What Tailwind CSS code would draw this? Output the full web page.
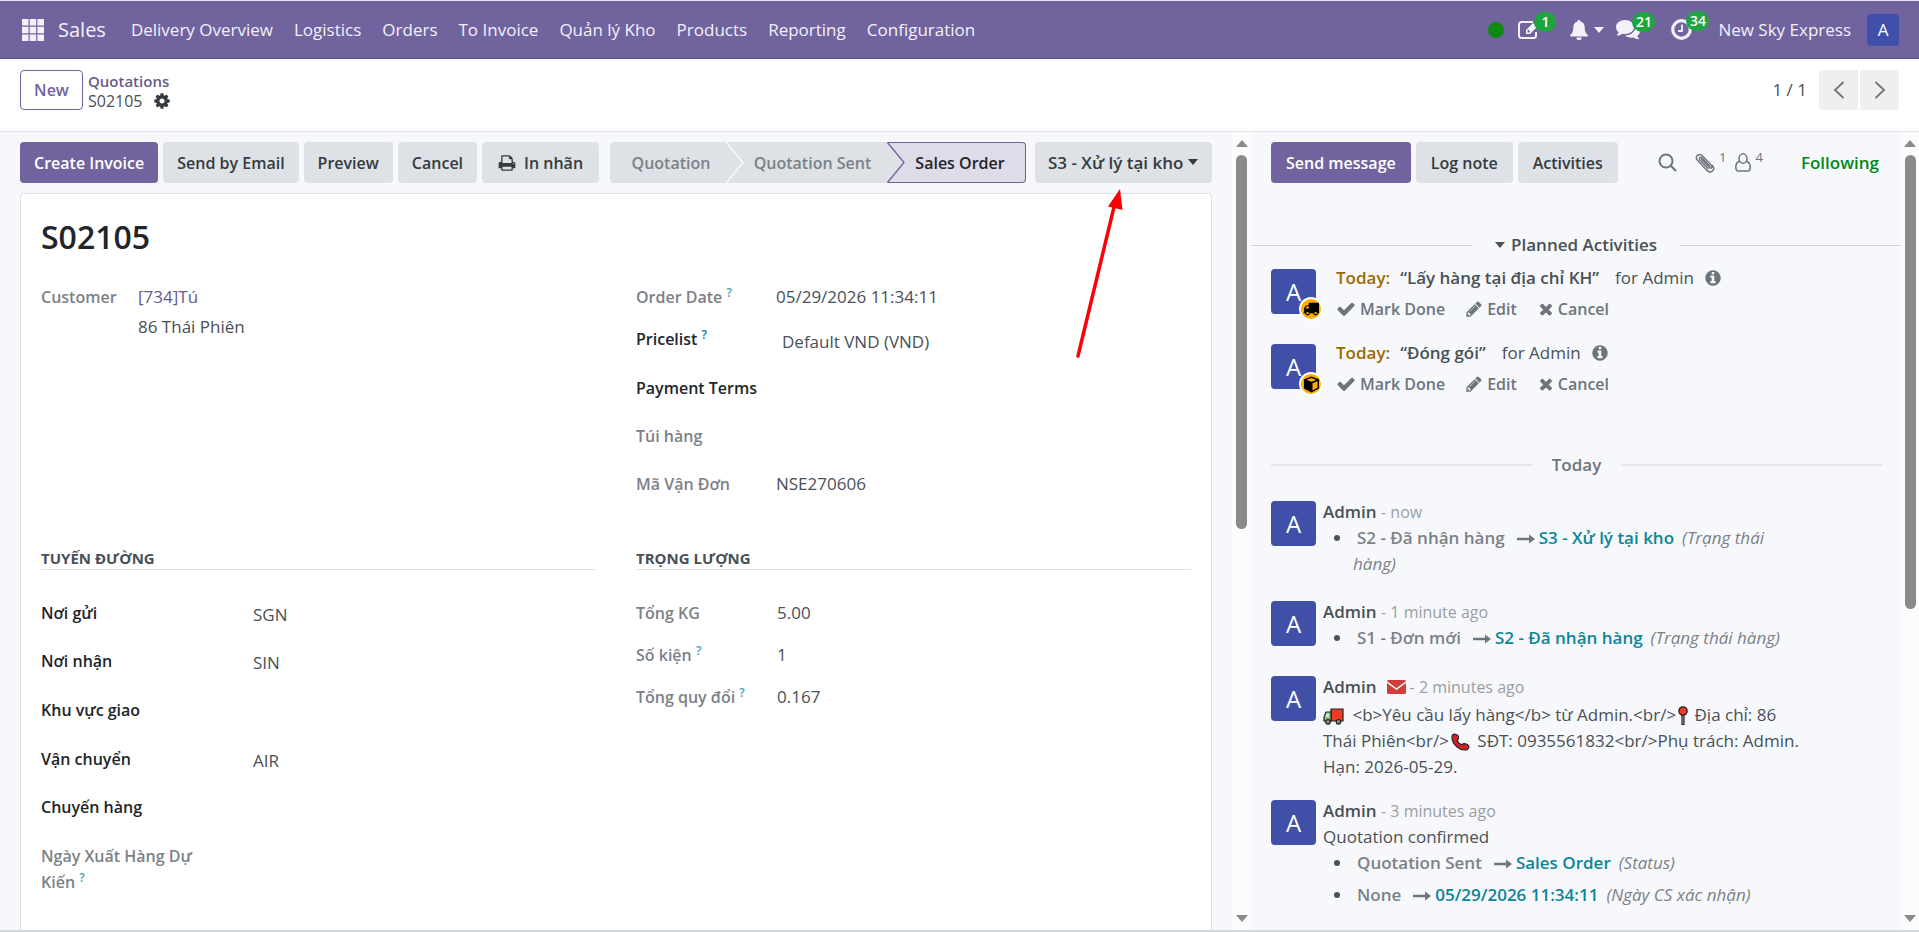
<!DOCTYPE html>
<html lang="vi">
<head>
  <meta charset="UTF-8" />
  <meta name="viewport" content="width=device-width, initial-scale=1.0"/>
  <title>S02105 - Quotations</title>
  <script src="https://cdn.jsdelivr.net/npm/@tailwindcss/browser@4"></script>
</head>
<body class="h-screen flex flex-col overflow-hidden bg-white font-['Open_Sans','Noto_Sans',sans-serif] text-[17px] leading-[26px] text-[#495057]">

  <!-- Shared icons -->
  <svg class="hidden">
    <symbol id="check" viewBox="0 0 1792 1792"><path d="M1671 566q0 40-28 68l-724 724-136 136q-28 28-68 28t-68-28l-136-136-362-362q-28-28-28-68t28-68l136-136q28-28 68-28t68 28l294 295 656-657q28-28 68-28t68 28l136 136q28 28 28 68z"/></symbol>
    <symbol id="times" viewBox="0 0 1792 1792"><path d="M1490 1322q0 40-28 68l-136 136q-28 28-68 28t-68-28l-294-294-294 294q-28 28-68 28t-68-28l-136-136q-28-28-28-68t28-68l294-294-294-294q-28-28-28-68t28-68l136-136q28-28 68-28t68 28l294 294 294-294q28-28 68-28t68 28l136 136q28 28 28 68t-28 68l-294 294 294 294q28 28 28 68z"/></symbol>
    <symbol id="pencil" viewBox="0 0 1792 1792"><path d="M491 1536l91-91-235-235-91 91v107h128v128h107zm523-928q0-22-22-22-10 0-17 7l-542 542q-7 7-7 17 0 22 22 22 10 0 17-7l542-542q7-7 7-17zm-54-192l416 416-832 832h-416v-416zm683 96q0 53-37 90l-166 166-416-416 166-165q36-38 90-38 53 0 91 38l235 234q37 39 37 91z"/></symbol>
    <symbol id="info" viewBox="0 0 1792 1792"><path d="M1152 1376v-160q0-14-9-23t-23-9h-96v-512q0-14-9-23t-23-9h-320q-14 0-23 9t-9 23v160q0 14 9 23t23 9h96v320h-96q-14 0-23 9t-9 23v160q0 14 9 23t23 9h448q14 0 23-9t9-23zm-128-896v-160q0-14-9-23t-23-9h-192q-14 0-23 9t-9 23v160q0 14 9 23t23 9h192q14 0 23-9t9-23zm640 416q0 209-103 385.5t-279.5 279.5-385.5 103-385.5-103-279.5-279.5-103-385.5 103-385.5 279.5-279.5 385.5-103 385.5 103 279.5 279.5 103 385.5z"/></symbol>
    <symbol id="arrow" viewBox="0 0 18 12"><path d="M0 4.700h12V1.500L18 6l-6 4.500V7.300H0z"/></symbol>
    <symbol id="caret" viewBox="0 0 10 6"><path d="M0 0h10L5 6z"/></symbol>
  </svg>

  <!-- Navbar -->
  <nav class="h-[59px] shrink-0 flex items-center bg-[#71639e] border-t border-t-[#e4e0f2] border-b border-b-[#5a4f7f] text-[#f3f0fa] pl-[22px] pr-5">
    <button aria-label="Apps">
      <svg class="w-[22px] h-[22px]" viewBox="0 0 22 22" fill="currentColor"><path d="M0 0h6.500v6.500H0zM7.700 0h6.500v6.500H7.700zM15.400 0H22v6.500h-6.600zM0 7.700h6.500v6.500H0zM7.700 7.700h6.500v6.500H7.700zM15.400 7.700H22v6.500h-6.600zM0 15.400h6.500V22H0zM7.700 15.400h6.500V22H7.700zM15.400 15.400H22V22h-6.600z"/></svg>
    </button>
    <a href="#" class="ml-[14px] text-[20px]">Sales</a>
    <div class="ml-[25px] flex gap-[21px] whitespace-nowrap">
      <a href="#">Delivery Overview</a>
      <a href="#">Logistics</a>
      <a href="#">Orders</a>
      <a href="#">To Invoice</a>
      <a href="#">Quản lý Kho</a>
      <a href="#">Products</a>
      <a href="#">Reporting</a>
      <a href="#">Configuration</a>
    </div>
    <div class="ml-auto flex items-center whitespace-nowrap">
      <span class="w-4 h-4 rounded-full bg-[#0c8a12]"></span>
      <button class="relative ml-[14px]" aria-label="Notes">
        <svg class="w-5 h-5" viewBox="0 0 20 20" fill="none" stroke="currentColor" stroke-width="2"><path d="M18 12v3.500a2.500 2.500 0 0 1-2.500 2.500h-12A2.500 2.500 0 0 1 1 15.500v-11A2.500 2.500 0 0 1 3.500 2H15"/><path fill="currentColor" stroke="none" d="M8 14v-4l7-7 4 4-7 7zM9.500 10.600v1.900h1.900l.8-.8-1.900-1.900z"/></svg>
        <span class="absolute -top-2 left-4 w-[22px] h-5 rounded-full bg-[#1fa53f] text-white text-[14px] leading-5 font-semibold text-center">1</span>
      </button>
      <button class="ml-[32px] flex items-center gap-1.5" aria-label="Notifications">
        <svg class="w-[18px] h-5" viewBox="0 0 18 20" fill="currentColor"><path d="M9 0c.9 0 1.500.6 1.500 1.400 2.700.6 4.200 2.800 4.200 5.600 0 4.500 1.200 6.600 3.300 8.300 0 .8-.6 1.300-1.300 1.300H1.300C.6 16.600 0 16.100 0 15.300 2.100 13.600 3.300 11.500 3.300 7c0-2.800 1.500-5 4.200-5.600C7.500.6 8.100 0 9 0zM6.400 17.400h5.200a2.600 2.600 0 0 1-5.200 0z"/></svg>
        <svg class="w-[10px] h-[6px]" fill="currentColor"><use href="#caret"/></svg>
      </button>
      <button class="relative ml-3" aria-label="Messages">
        <svg class="w-6 h-5" viewBox="0 0 24 20" fill="currentColor"><path d="M9 0c5 0 9 3.100 9 7s-4 7-9 7c-.9 0-1.700-.1-2.500-.3C5 14.800 3.200 15.400 1.200 15.500c-.4 0-.5-.4-.2-.7.900-.9 1.500-1.600 1.700-2.600C1 11 0 9.100 0 7c0-3.900 4-7 9-7z"/><path d="M19.500 5.300C22 6.400 24 8.600 24 11c0 2-1 3.700-2.700 4.900.3 1 .9 1.800 1.800 2.700.3.300.1.700-.3.700-2-.1-3.800-.8-5.200-1.800-3 .7-6.400-.1-8.600-1.900C15 15.500 20 11.500 19.500 5.300z"/></svg>
        <span class="absolute -top-2 left-4 w-[23px] h-5 rounded-full bg-[#1fa53f] text-white text-[14px] leading-5 font-semibold text-center">21</span>
      </button>
      <button class="relative ml-[31px]" aria-label="Activities">
        <svg class="w-[21px] h-[21px]" viewBox="0 0 21 21" fill="none" stroke="currentColor"><circle cx="10.500" cy="10.500" r="8.800" stroke-width="3.200"/><path d="M11 5.500V12H7" stroke-width="1.800"/></svg>
        <span class="absolute -top-2 left-[15px] w-[23px] h-5 rounded-full bg-[#1fa53f] text-white text-[14px] leading-5 font-semibold text-center">34</span>
      </button>
      <button class="ml-[26px] flex items-center gap-4">
        <span>New Sky Express</span>
        <span class="w-8 h-8 rounded bg-[#4050a8] text-white leading-8 text-center">A</span>
      </button>
    </div>
  </nav>

  <!-- Control panel -->
  <header class="h-[73px] shrink-0 flex justify-between px-5 pt-[11px] border-b border-[#dee2e6]">
    <div class="flex gap-[5px]">
      <button class="h-10 w-[63px] border border-[#71639e] rounded text-[#71639e] text-[16px] font-semibold">New</button>
      <div class="flex flex-col leading-5 pt-px">
        <a href="#" class="text-[#665b8c] text-[15px] font-semibold">Quotations</a>
        <span class="flex items-center gap-2.5 text-[16px]">S02105
          <button aria-label="Actions"><svg class="w-[18px] h-[18px] fill-[#343a40]" viewBox="0 0 1792 1792"><path d="M1152 896q0-106-75-181t-181-75-181 75-75 181 75 181 181 75 181-75 75-181zm512-109v222q0 12-8 23t-20 13l-185 28q-19 54-39 91 35 50 107 138 10 12 10 25t-9 23q-27 37-99 108t-94 71q-12 0-26-9l-138-108q-44 23-91 38-16 136-29 186-7 28-36 28h-222q-14 0-24.500-8.500t-11.500-21.500l-28-184q-49-16-90-37l-141 107q-10 9-25 9-14 0-25-11-126-114-165-168-7-10-7-23 0-12 8-23 15-21 51-66.500t54-70.500q-27-50-41-99l-183-27q-13-2-21-12.500t-8-23.500v-222q0-12 8-23t19-13l186-28q14-46 39-92-40-57-107-138-10-12-10-24 0-10 9-23 26-36 98.500-107.500t94.500-71.500q13 0 26 10l138 107q44-23 91-38 16-136 29-186 7-28 36-28h222q14 0 24.500 8.500t11.500 21.500l28 184q49 16 90 37l142-107q9-9 24-9 13 0 25 10 129 119 165 170 7 8 7 22 0 12-8 23-15 21-51 66.500t-54 70.500q26 50 41 98l183 28q13 2 21 12.500t8 23.500z"/></svg></button>
        </span>
      </div>
    </div>
    <div class="flex gap-0.5">
      <span class="mr-2.5 leading-10">1 / 1</span>
      <button class="w-[39px] h-10 rounded-l bg-[#efeff0] grid place-items-center" aria-label="Previous"><svg class="w-3 h-[18px]" viewBox="0 0 12 18" fill="none" stroke="#6c757d" stroke-width="1.800"><path d="M10.500 1 2 9l8.500 8"/></svg></button>
      <button class="w-[39px] h-10 rounded-r bg-[#efeff0] grid place-items-center" aria-label="Next"><svg class="w-3 h-[18px]" viewBox="0 0 12 18" fill="none" stroke="#6c757d" stroke-width="1.800"><path d="M1.500 1 10 9l-8.500 8"/></svg></button>
    </div>
  </header>

  <main class="flex-1 min-h-0 flex bg-[#f7f8fb] border-b-2 border-[#d5d8da]">

    <!-- Form view -->
    <section class="relative flex-1 min-w-0 flex flex-col px-5 pt-[10px] overflow-hidden">
      <div class="flex justify-between shrink-0 whitespace-nowrap text-[16px] font-semibold text-[#343a40]">
        <div class="flex gap-[5px]">
          <button class="h-[41px] px-[14px] rounded bg-[#71639e] text-white">Create Invoice</button>
          <button class="h-[41px] px-[14px] rounded bg-[#dee2e6]">Send by Email</button>
          <button class="h-[41px] px-[14px] rounded bg-[#dee2e6]">Preview</button>
          <button class="h-[41px] px-[14px] rounded bg-[#dee2e6]">Cancel</button>
          <button class="h-[41px] px-4 rounded bg-[#dee2e6] flex items-center gap-2">
            <svg class="w-[18px] h-[18px]" viewBox="0 0 1792 1792" fill="currentColor"><path d="M448 1536h896v-256h-896v256zm0-640h896v-384h-160q-40 0-68-28t-28-68v-160h-640v640zm1152 64q0-26-19-45t-45-19-45 19-19 45 19 45 45 19 45-19 19-45zm128 0v416q0 13-9.500 22.500t-22.500 9.500h-224v160q0 40-28 68t-68 28h-960q-40 0-68-28t-28-68v-160h-224q-13 0-22.500-9.500t-9.500-22.500v-416q0-79 56.500-135.500t135.500-56.500h64v-544q0-40 28-68t68-28h672q40 0 88 20t76 48l152 152q28 28 48 76t20 88v256h64q79 0 135.500 56.500t56.500 135.500z"/></svg>
            In nhãn
          </button>
        </div>
        <div class="flex gap-[9px]">
          <div class="flex h-[41px] rounded bg-[#dee2e6] text-[#7b8187]">
            <button class="w-[116px] pl-1.5">Quotation</button>
            <button class="relative w-[161px] pl-3">Quotation Sent
              <svg class="absolute left-0 top-0 w-[18px] h-[41px]" viewBox="0 0 18 41" fill="none" stroke="#f8f9fb" stroke-width="1.500"><path d="M0 0l17 20.500L0 41"/></svg>
            </button>
            <button class="relative w-[139px] pl-2 rounded-r bg-[#dfdbe8] border border-l-0 border-[#71639e] text-[#212529]">Sales Order
              <svg class="absolute left-0 -top-px w-[18px] h-[41px]" viewBox="0 0 18 41"><path d="M0 0l17 20.500L0 41z" fill="#dee2e6"/><path d="M.5.500l16.500 20L.5 40.500" fill="none" stroke="#71639e" stroke-width="1.300"/></svg>
            </button>
          </div>
          <div class="relative">
            <select aria-label="Trạng thái hàng" class="appearance-none h-[41px] w-[177px] pl-[13px] rounded bg-[#dee2e6] text-[17px]">
              <option>S3 - Xử lý tại kho</option>
            </select>
            <svg class="absolute right-[14px] top-[17px] w-[10px] h-[6px] pointer-events-none" fill="currentColor"><use href="#caret"/></svg>
          </div>
        </div>
      </div>

      <!-- Sheet -->
      <div class="mt-[10px] flex-1 bg-white border border-b-0 border-[#dee2e6] rounded-t px-5 pt-[23px]">
        <h1 class="text-[32px] leading-10 font-semibold text-[#212529]">S02105</h1>

        <div class="mt-[19px] grid grid-cols-2 gap-x-10">
          <div>
            <div class="flex pt-2">
              <span class="w-[97px] text-[16px] font-semibold text-[#7b8187]">Customer</span>
              <div class="leading-[30px] -mt-0.5">
                <a href="#" class="text-[#665b8c]">[734]Tú</a>
                <p>86 Thái Phiên</p>
              </div>
            </div>
          </div>
          <div>
            <div class="h-[42px] flex items-center">
              <span class="w-[140px] text-[16px] font-semibold text-[#7b8187]">Order Date <sup class="text-[12px] text-[#4aa3b5]">?</sup></span>
              <span>05/29/2026 11:34:11</span>
            </div>
            <div class="h-[46px] flex items-center">
              <label for="pricelist" class="w-[140px] pb-1 text-[16px] font-semibold text-[#212529]">Pricelist <sup class="text-[12px] text-[#017e9a]">?</sup></label>
              <input id="pricelist" class="flex-1 min-w-0 pl-1.5 pt-0.5" value="Default VND (VND)" />
            </div>
            <div class="h-12 flex items-center">
              <label for="terms" class="w-[140px] text-[16px] font-semibold text-[#212529]">Payment Terms</label>
              <input id="terms" class="flex-1 min-w-0 pl-1.5" />
            </div>
            <div class="h-12 flex items-center">
              <span class="w-[140px] text-[16px] font-semibold text-[#7b8187]">Túi hàng</span>
            </div>
            <div class="h-12 flex items-center">
              <span class="w-[140px] text-[16px] font-semibold text-[#7b8187]">Mã Vận Đơn</span>
              <span>NSE270606</span>
            </div>
          </div>
        </div>

        <div class="mt-[39px] grid grid-cols-2 gap-x-10">
          <div>
            <h2 class="text-[15px] leading-[22px] font-bold border-b border-[#dee2e6]">TUYẾN ĐƯỜNG</h2>
            <div class="mt-[19px]">
              <div class="h-12 flex items-center">
                <label for="from" class="w-[212px] text-[16px] font-semibold text-[#212529]">Nơi gửi</label>
                <input id="from" class="flex-1 min-w-0 pt-1" value="SGN" />
              </div>
              <div class="h-12 flex items-center">
                <label for="to" class="w-[212px] text-[16px] font-semibold text-[#212529]">Nơi nhận</label>
                <input id="to" class="flex-1 min-w-0 pt-1" value="SIN" />
              </div>
              <div class="h-[49px] flex items-center">
                <label for="area" class="w-[212px] text-[16px] font-semibold text-[#212529]">Khu vực giao</label>
                <input id="area" class="flex-1 min-w-0 pt-1" />
              </div>
              <div class="h-[49px] flex items-center">
                <label for="mode" class="w-[212px] text-[16px] font-semibold text-[#212529]">Vận chuyển</label>
                <input id="mode" class="flex-1 min-w-0 pt-1" value="AIR" />
              </div>
              <div class="h-12 flex items-center">
                <label for="trip" class="w-[212px] text-[16px] font-semibold text-[#212529]">Chuyến hàng</label>
                <input id="trip" class="flex-1 min-w-0 pt-1" />
              </div>
              <div class="flex pt-3">
                <span class="w-[172px] text-[16px] font-semibold text-[#7b8187]">Ngày Xuất Hàng Dự Kiến <sup class="text-[12px] text-[#4aa3b5]">?</sup></span>
              </div>
            </div>
          </div>
          <div>
            <h2 class="text-[15px] leading-[22px] font-bold border-b border-[#dee2e6]">TRỌNG LƯỢNG</h2>
            <div class="mt-[22px]">
              <div class="h-[42px] flex items-center">
                <span class="w-[141px] text-[16px] font-semibold text-[#7b8187]">Tổng KG</span>
                <span>5.00</span>
              </div>
              <div class="h-[42px] flex items-center">
                <span class="w-[141px] text-[16px] font-semibold text-[#7b8187]">Số kiện <sup class="text-[12px] text-[#4aa3b5]">?</sup></span>
                <span>1</span>
              </div>
              <div class="h-[42px] flex items-center">
                <span class="w-[141px] text-[16px] font-semibold text-[#7b8187]">Tổng quy đổi <sup class="text-[12px] text-[#4aa3b5]">?</sup></span>
                <span>0.167</span>
              </div>
            </div>
          </div>
        </div>
      </div>

      <!-- Pointer to the status drop-down -->
      <svg class="absolute right-[109px] top-[56px] w-[48px] h-[172px] pointer-events-none" viewBox="0 0 48 172"><path d="M3 168L39.500 17" stroke="#fb0007" stroke-width="3.500" stroke-linecap="round"/><path d="M45 1l2.500 21L33 18.500z" fill="#fb0007"/></svg>
    </section>

    <!-- Form scrollbar -->
    <div class="w-[19px] shrink-0 flex flex-col items-center bg-[#fcfcfd] py-2">
      <svg class="w-3 h-[7px]" viewBox="0 0 12 7"><path d="M0 7h12L6 0z" fill="#8a8a8a"/></svg>
      <div class="mt-2 w-[11px] h-[374px] rounded-full bg-[#8a8a8a]"></div>
      <svg class="mt-auto w-3 h-[7px]" viewBox="0 0 12 7"><path d="M0 0h12L6 7z" fill="#8a8a8a"/></svg>
    </div>

    <!-- Chatter -->
    <aside class="w-[650px] shrink-0 pt-[10px] overflow-hidden">
      <div class="flex items-center pl-5 pr-[22px] font-semibold whitespace-nowrap text-[#343a40]">
        <div class="flex gap-[5px] text-[16px]">
          <button class="h-[41px] px-[15px] rounded bg-[#71639e] text-white">Send message</button>
          <button class="h-[41px] px-[15px] rounded bg-[#dee2e6]">Log note</button>
          <button class="h-[41px] px-[15px] rounded bg-[#dee2e6]">Activities</button>
        </div>
        <div class="ml-auto flex items-center font-normal text-[#6c757d]">
          <button aria-label="Search"><svg class="w-[19px] h-[19px]" viewBox="0 0 19 19" fill="none" stroke="currentColor" stroke-width="2"><circle cx="8" cy="8" r="6.500"/><path d="M12.800 12.800L18 18"/></svg></button>
          <button class="ml-[18px] flex items-center gap-1" aria-label="Attachments">
            <svg class="w-5 h-5" viewBox="0 0 20 20" fill="none" stroke="currentColor" stroke-width="1.500" stroke-linecap="round"><path d="M6.500 6l8 8.500c1.500 1.600 3.500-.2 2-1.900L7.200 2.800C3.800-.6-.6 3.700 2.500 7.200l9.500 10.200c4 3.900 9-1 5.300-5"/><path d="M13 15.500L4.800 6.800c-1.400-1.700.6-3.400 2-2l8 8.600"/></svg>
            <span class="text-[13px] leading-3 -mt-3">1</span>
          </button>
          <button class="ml-[9px] flex items-center gap-1" aria-label="Followers">
            <svg class="w-4 h-[19px]" viewBox="0 0 16 19" fill="none" stroke="currentColor" stroke-width="1.500"><ellipse cx="8" cy="5.500" rx="4" ry="4.700"/><path d="M4.700 8.300C2 9 .8 11.500.8 14.500c0 2 1 3.500 2.700 3.500h9c1.700 0 2.700-1.500 2.700-3.500 0-3-1.200-5.500-3.900-6.200"/></svg>
            <span class="text-[13px] leading-3 -mt-3">4</span>
          </button>
          <button class="ml-[38px] font-semibold text-[#008818]">Following</button>
        </div>
      </div>

      <!-- Planned activities -->
      <div class="mt-[49px] flex items-center">
        <hr class="flex-1 border-[#ced1d6]" />
        <button class="mx-[23px] flex items-center gap-1.5 font-semibold"><svg class="w-[10px] h-[6px]" fill="currentColor"><use href="#caret"/></svg>Planned Activities</button>
        <hr class="flex-1 border-[#ced1d6]" />
      </div>
      <div class="mt-[11px] pl-5 flex flex-col gap-[26px]">
        <div class="flex gap-5">
          <div class="relative w-[45px] h-[45px] rounded bg-[#4050a8] text-white text-[24px] leading-[45px] text-center">A
            <span class="absolute -right-[7px] -bottom-[7px] w-6 h-6 rounded-full border-2 border-white bg-[#ffac00] grid place-items-center"><svg class="w-4 h-4" viewBox="0 0 1792 1792"><path transform="translate(0 -50)" d="M640 1408q0-52-38-90t-90-38-90 38-38 90 38 90 90 38 90-38 38-90zm-384-512h384v-256h-158q-13 0-22 9l-195 195q-9 9-9 22v30zm1280 512q0-52-38-90t-90-38-90 38-38 90 38 90 90 38 90-38 38-90zm256-1088v1024q0 15-4 26.500t-13.500 18.500-16.500 11.500-23.500 6-22.500 2-25.500 0-22.500-.5q0 106-75 181t-181 75-181-75-75-181h-384q0 106-75 181t-181 75-181-75-75-181h-64q-3 0-22.500.5t-25.500 0-22.500-2-23.500-6-16.500-11.500-13.500-18.500-4-26.500q0-26 19-45t45-19v-320q0-8-.5-35t0-38 2.500-34.500 6.500-37 14-30.500 22.500-30l198-198q19-19 50.500-32t58.500-13h160v-192q0-26 19-45t45-19h1024q26 0 45 19t19 45z"/></svg></span>
          </div>
          <div class="-mt-1 h-[53px]">
            <p class="flex items-center font-semibold"><span class="text-[#9a6b01]">Today:</span><span class="ml-2.5">“Lấy hàng tại địa chỉ KH”</span><span class="ml-4 font-normal">for Admin</span><svg class="ml-2.5 w-[18px] h-[18px] fill-[#6c757d]"><use href="#info"/></svg></p>
            <p class="mt-[5px] flex items-center gap-5 text-[16px] font-semibold text-[#6c757d]">
              <button class="flex items-center gap-1"><svg class="w-5 h-5" fill="currentColor"><use href="#check"/></svg>Mark Done</button>
              <button class="flex items-center gap-1"><svg class="w-[18px] h-[18px]" fill="currentColor"><use href="#pencil"/></svg>Edit</button>
              <button class="flex items-center gap-[3px]"><svg class="w-[18px] h-[18px]" fill="currentColor"><use href="#times"/></svg>Cancel</button>
            </p>
          </div>
        </div>
        <div class="flex gap-5">
          <div class="relative w-[45px] h-[45px] rounded bg-[#4050a8] text-white text-[24px] leading-[45px] text-center">A
            <span class="absolute -right-[7px] -bottom-[7px] w-6 h-6 rounded-full border-2 border-white bg-[#ffac00] grid place-items-center"><svg class="w-[17px] h-[17px]" viewBox="0 0 17 17"><path d="M8.500.5L16 3.300v9.200l-7.500 4-7.500-4V3.300z"/><path d="M8.500 2L13.500 3.900 8.500 5.800 3.500 3.900zM9.500 7.200l5-2v6.500l-5 2.800z" fill="#ffac00"/></svg></span>
          </div>
          <div class="-mt-1 h-[53px]">
            <p class="flex items-center font-semibold"><span class="text-[#9a6b01]">Today:</span><span class="ml-2.5">“Đóng gói”</span><span class="ml-4 font-normal">for Admin</span><svg class="ml-2.5 w-[18px] h-[18px] fill-[#6c757d]"><use href="#info"/></svg></p>
            <p class="mt-[5px] flex items-center gap-5 text-[16px] font-semibold text-[#6c757d]">
              <button class="flex items-center gap-1"><svg class="w-5 h-5" fill="currentColor"><use href="#check"/></svg>Mark Done</button>
              <button class="flex items-center gap-1"><svg class="w-[18px] h-[18px]" fill="currentColor"><use href="#pencil"/></svg>Edit</button>
              <button class="flex items-center gap-[3px]"><svg class="w-[18px] h-[18px]" fill="currentColor"><use href="#times"/></svg>Cancel</button>
            </p>
          </div>
        </div>
      </div>

      <!-- Message thread -->
      <div class="mt-[59px] pl-5 pr-[19px] flex items-center">
        <hr class="flex-1 border-t-2 border-[#e3e5ea]" />
        <span class="mx-5 font-semibold text-[#6c757d]">Today</span>
        <hr class="flex-1 border-t-2 border-[#e3e5ea]" />
      </div>
      <div class="mt-[23px] pl-5 flex flex-col">
        <div class="h-[100px] flex gap-[7px]">
          <div class="w-[45px] h-[45px] rounded bg-[#4050a8] text-white text-[24px] leading-[45px] text-center">A</div>
          <div class="w-[500px] -mt-0.5">
            <p><span class="font-semibold">Admin</span> <span class="text-[16px] text-[#999ea3]">- now</span></p>
            <ul class="pl-[30px] list-disc">
              <li class="pr-7"><span class="ml-1 mr-3 font-semibold text-[#7b8187]">S2 - Đã nhận hàng</span><svg class="inline w-[18px] h-3 mr-1 fill-[#6c757d]"><use href="#arrow"/></svg><span class="mr-2 font-semibold text-[#0c8599]">S3 - Xử lý tại kho</span><i class="text-[#7b8187]">(Trạng thái hàng)</i></li>
            </ul>
          </div>
        </div>
        <div class="h-[75px] flex gap-[7px]">
          <div class="w-[45px] h-[45px] rounded bg-[#4050a8] text-white text-[24px] leading-[45px] text-center">A</div>
          <div class="w-[500px] -mt-0.5">
            <p><span class="font-semibold">Admin</span> <span class="text-[16px] text-[#999ea3]">- 1 minute ago</span></p>
            <ul class="pl-[30px] list-disc">
              <li class="whitespace-nowrap"><span class="ml-1 mr-3 font-semibold text-[#7b8187]">S1 - Đơn mới</span><svg class="inline w-[18px] h-3 mr-1 fill-[#6c757d]"><use href="#arrow"/></svg><span class="mr-2 font-semibold text-[#0c8599]">S2 - Đã nhận hàng</span><i class="text-[#7b8187]">(Trạng thái hàng)</i></li>
            </ul>
          </div>
        </div>
        <div class="h-[124px] flex gap-[7px]">
          <div class="w-[45px] h-[45px] rounded bg-[#4050a8] text-white text-[24px] leading-[45px] text-center">A</div>
          <div class="w-[500px] -mt-0.5">
            <p class="flex items-center"><span class="font-semibold">Admin</span><svg class="ml-2.5 mr-1 w-[19px] h-[14px]" viewBox="0 0 19 14"><rect width="19" height="14" rx="1.500" fill="#d23f3a"/><path d="M0 2l9.500 7L19 2" fill="none" stroke="#f8f9fb" stroke-width="1.500"/></svg><span class="text-[16px] text-[#999ea3]">- 2 minutes ago</span></p>
            <p class="mt-0.5">
              <svg class="inline w-[21px] h-[17px] mr-1" viewBox="0 0 21 17" stroke="#222" stroke-width="1.200"><path d="M8 1h12v12H8z" fill="#f03a24"/><path d="M3 4h5v9H1V9z" fill="#8bbf6a"/><path d="M3.600 5.500H6V9H2.500z" fill="#bfe8f5" stroke="none"/><circle cx="5" cy="13.800" r="2.300" fill="#888"/><circle cx="15.500" cy="13.800" r="2.300" fill="#888"/></svg>
              &lt;b&gt;Yêu cầu lấy hàng&lt;/b&gt; từ Admin.&lt;br/&gt;<svg class="inline w-[10px] h-5 mx-0.5" viewBox="0 0 10 20" stroke="#222" stroke-width="1.200"><path d="M4 9h2v9.500H4z" fill="#bbb"/><circle cx="5" cy="5" r="4.200" fill="#f03a24"/></svg>
              Địa chỉ: 86 Thái&nbsp;Phiên&lt;br/&gt;<svg class="inline w-5 h-[18px] mx-0.5" viewBox="0 0 20 18" stroke="#222" stroke-width="1.200"><path d="M3.500 1l3 1c1 .5 1.300 3.500.5 4.500l-1 .8c.8 2.200 2.600 3.700 5 4.500l1.200-1c1.500-.6 4.500.7 5.300 1.700.8 1.200 0 3.300-1.500 4.200C9 18.500 1 11 1 4.500 1 2.500 2 1 3.500 1z" fill="#d81e2c"/></svg>
              SĐT: 0935561832&lt;br/&gt;Phụ trách: Admin. Hạn: 2026-05-29.
            </p>
          </div>
        </div>
        <div class="flex gap-[7px]">
          <div class="w-[45px] h-[45px] rounded bg-[#4050a8] text-white text-[24px] leading-[45px] text-center">A</div>
          <div class="w-[500px] -mt-0.5">
            <p><span class="font-semibold">Admin</span> <span class="text-[16px] text-[#999ea3]">- 3 minutes ago</span></p>
            <p>Quotation confirmed</p>
            <ul class="pl-[30px] list-disc flex flex-col gap-1.5">
              <li><span class="ml-1 mr-3 font-semibold text-[#7b8187]">Quotation Sent</span><svg class="inline w-[18px] h-3 mr-1 fill-[#6c757d]"><use href="#arrow"/></svg><span class="mr-2 font-semibold text-[#0c8599]">Sales Order</span><i class="text-[#7b8187]">(Status)</i></li>
              <li><span class="ml-1 mr-3 font-semibold text-[#7b8187]">None</span><svg class="inline w-[18px] h-3 mr-1 fill-[#6c757d]"><use href="#arrow"/></svg><span class="mr-2 font-semibold text-[#0c8599]">05/29/2026 11:34:11</span><i class="text-[#7b8187]">(Ngày CS xác nhận)</i></li>
            </ul>
          </div>
        </div>
      </div>
    </aside>

    <!-- Chatter scrollbar -->
    <div class="w-[18px] shrink-0 flex flex-col items-center bg-[#fcfcfd] py-2">
      <svg class="w-3 h-[7px]" viewBox="0 0 12 7"><path d="M0 7h12L6 0z" fill="#8a8a8a"/></svg>
      <div class="mt-2 w-[11px] h-[454px] rounded-full bg-[#8a8a8a]"></div>
      <svg class="mt-auto w-3 h-[7px]" viewBox="0 0 12 7"><path d="M0 0h12L6 7z" fill="#8a8a8a"/></svg>
    </div>
  </main>

</body>
</html>
